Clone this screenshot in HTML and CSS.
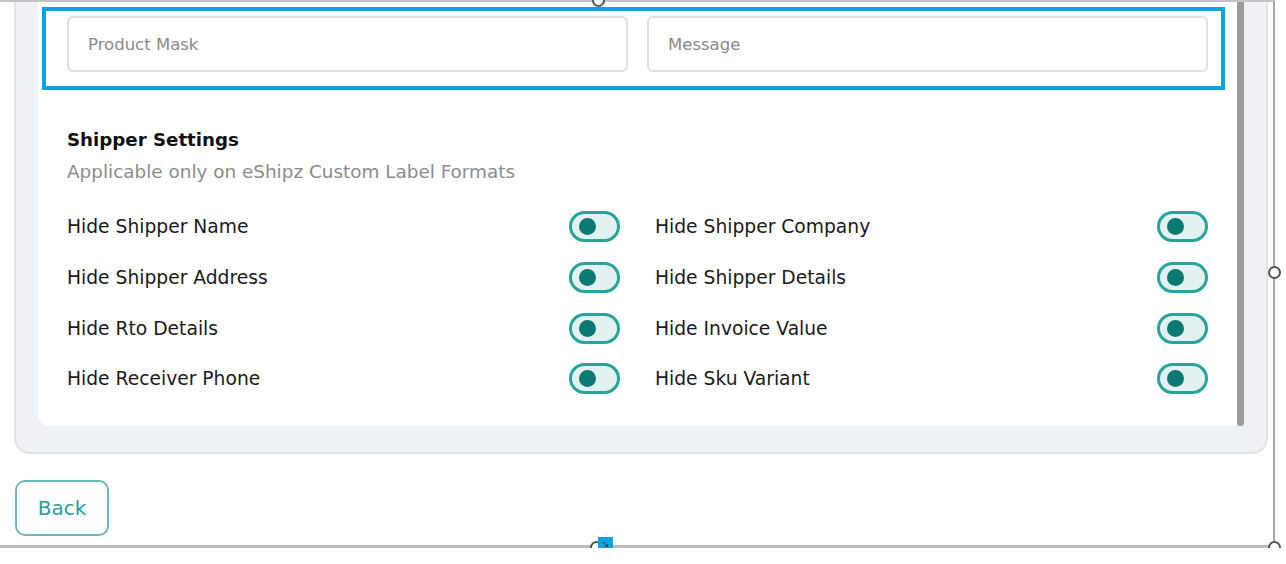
FILE: index.html
```html
<!DOCTYPE html>
<html lang="en">
<head>
  <meta charset="UTF-8" />
  <meta name="viewport" content="width=device-width, initial-scale=1.0"/>
  <title>Label Settings</title>
  <link rel="stylesheet" href="styles.css">
</head>
<body>
<div class="frame">

  <!-- Settings card -->
  <div class="card">
    <div class="panel">
      <div class="field-row">
        <input type="text" placeholder="Product Mask" />
        <input type="text" placeholder="Message" />
      </div>

      <div class="section-title">Shipper Settings</div>
      <div class="section-sub">Applicable only on eShipz Custom Label Formats</div>

      <div class="toggle-grid">
        <div class="toggle-row"><span>Hide Shipper Name</span><label class="switch"><input type="checkbox"><i></i></label></div>
        <div class="toggle-row"><span>Hide Shipper Company</span><label class="switch"><input type="checkbox"><i></i></label></div>
        <div class="toggle-row"><span>Hide Shipper Address</span><label class="switch"><input type="checkbox"><i></i></label></div>
        <div class="toggle-row"><span>Hide Shipper Details</span><label class="switch"><input type="checkbox"><i></i></label></div>
        <div class="toggle-row"><span>Hide Rto Details</span><label class="switch"><input type="checkbox"><i></i></label></div>
        <div class="toggle-row"><span>Hide Invoice Value</span><label class="switch"><input type="checkbox"><i></i></label></div>
        <div class="toggle-row"><span>Hide Receiver Phone</span><label class="switch"><input type="checkbox"><i></i></label></div>
        <div class="toggle-row"><span>Hide Sku Variant</span><label class="switch"><input type="checkbox"><i></i></label></div>
      </div>
    </div>
    <div class="scroll-thumb"></div>
  </div>

  <button class="back-btn">Back</button>

  <!-- editor handles -->
  <span class="handle handle-top"></span>
  <span class="handle handle-right"></span>
  <span class="handle handle-bottom"></span>
  <span class="handle handle-corner"></span>
  <span class="resize-tag">&#8600;</span>
</div>
</body>
</html>
```

FILE: styles.css
```css
* {
  box-sizing: border-box;
}

body {
  margin: 0;
  background: #ffffff;
  font-family: 'DejaVu Sans', 'Inter', sans-serif;
  color: #222;
  overflow: hidden;
}

.frame {
  position: relative;
  width: 1275px;
  height: 548px;
  border-top: 2px solid #c4c4c4;
  border-right: 2px solid #a8a8a8;
  border-bottom: 3px solid #bdbdbd;
  padding: 0 6px 0 14px;
}

.card {
  display: flex;
  background: #eff2f5;
  border: 2px solid #e0e4e8;
  border-top: none;
  border-radius: 0 0 16px 16px;
  padding: 0 22px 26px 22px;
  width: 1254px;
}

.panel {
  flex: 1;
  background: #ffffff;
  border-radius: 0 0 0 12px;
  padding: 5px 12px 32px 4px;
}

.scroll-thumb {
  width: 7px;
  background: #9c9c9c;
  border-radius: 0 0 3px 3px;
}

.field-row {
  display: flex;
  gap: 19px;
  border: 4px solid #0aa2e2;
  padding: 5px 13px 14px 21px;
}

.field-row input {
  flex: 1;
  height: 56px;
  border: 2px solid #e0e0e0;
  border-radius: 6px;
  padding: 0 19px;
  font-family: inherit;
  font-size: 16.5px;
  outline: none;
}

.field-row input::placeholder {
  color: #8a8a8a;
}

.section-title {
  margin: 38px 0 0 25px;
  font-size: 18.2px;
  font-weight: bold;
  line-height: 24px;
  color: #111;
}

.section-sub {
  margin: 8px 0 0 25px;
  font-size: 18.4px;
  line-height: 24px;
  color: #8c8c8c;
}

.toggle-grid {
  display: grid;
  grid-template-columns: 1fr 1fr;
  column-gap: 35px;
  row-gap: 19.8px;
  margin: 27px 17px 0 25px;
}

.toggle-row {
  display: flex;
  align-items: center;
  justify-content: space-between;
  height: 31px;
  font-size: 18.7px;
  color: #1a1a1a;
}

.switch {
  position: relative;
  width: 51px;
  height: 31px;
  cursor: pointer;
}

.switch input {
  display: none;
}

.switch i {
  display: block;
  width: 100%;
  height: 100%;
  border: 3px solid #27a49c;
  border-radius: 16px;
  background: #e4f1f1;
}

.switch i::after {
  content: '';
  position: absolute;
  left: 10px;
  top: 7px;
  width: 17px;
  height: 17px;
  border-radius: 50%;
  background: #0b7a72;
}

.back-btn {
  display: block;
  margin: 26px 0 0 1px;
  width: 94px;
  height: 56px;
  background: #ffffff;
  border: 2px solid #6db8b6;
  border-radius: 10px;
  color: #2b9d99;
  font-family: inherit;
  font-size: 20px;
  cursor: pointer;
}

.handle {
  position: absolute;
  width: 13px;
  height: 13px;
  border: 2px solid #555;
  border-radius: 50%;
  background: #ffffff;
}

.handle-top {
  left: 592px;
  top: -8px;
}

.handle-right {
  right: -8px;
  top: 264px;
}

.handle-bottom {
  left: 590px;
  bottom: -9px;
}

.handle-corner {
  right: -8px;
  bottom: -9px;
}

.resize-tag {
  position: absolute;
  left: 598px;
  bottom: -7px;
  width: 15px;
  height: 15px;
  background: #0aa2e2;
  color: #333;
  font-size: 9px;
  line-height: 15px;
  text-align: center;
}
```
